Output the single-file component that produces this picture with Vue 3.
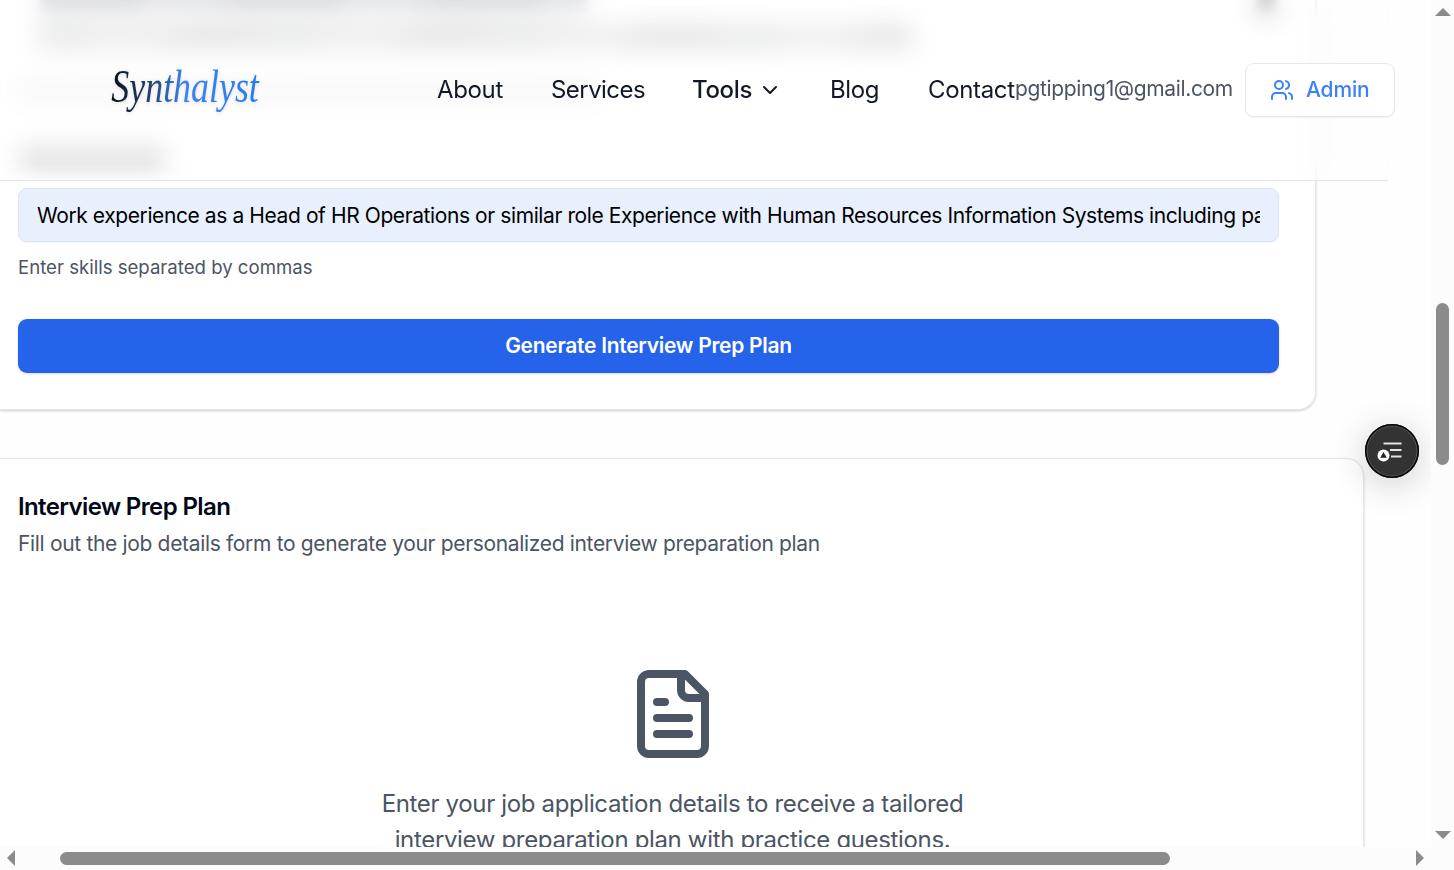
<script setup>
const links = [
  { label: 'About', cls: 'about' },
  { label: 'Services', cls: 'services' },
  { label: 'Tools', cls: 'tools', menu: true },
  { label: 'Blog', cls: 'blog' },
  { label: 'Contact', cls: 'contact' },
]
</script>

<template>
  <div class="window">
    <div class="viewport">
      <main class="page">
        <section class="card form-card">
          <div class="soft soft-title"></div>
          <div class="soft soft-lead"></div>
          <div class="soft soft-note"></div>
          <div class="soft soft-label"></div>
          <div class="soft soft-dot"></div>
          <div class="field"><span class="value">Work experience as a Head of HR Operations or similar role Experience with Human Resources Information Systems including payroll</span></div>
          <p class="hint"><span>Enter skills separated by commas</span></p>
          <button class="generate"><span>Generate Interview Prep Plan</span></button>
        </section>

        <section class="card plan-card">
          <h2><span>Interview Prep Plan</span></h2>
          <p class="sub"><span>Fill out the job details form to generate your personalized interview preparation plan</span></p>
          <div class="empty">
            <svg class="doc" viewBox="0 0 24 24" width="96" height="96" fill="none" stroke="currentColor" stroke-width="2" stroke-linecap="round" stroke-linejoin="round">
              <path d="M15 2H6a2 2 0 0 0-2 2v16a2 2 0 0 0 2 2h12a2 2 0 0 0 2-2V7Z" />
              <path d="M14 2v4a2 2 0 0 0 2 2h4M10 9H8M16 13H8M16 17H8" />
            </svg>
            <p class="e1"><span>Enter your job application details to receive a tailored</span></p>
            <p class="e2"><span>interview preparation plan with practice questions.</span></p>
          </div>
        </section>
      </main>

      <header class="bar">
        <div class="brand"><span class="logo">Synthalyst</span></div>
        <nav>
          <a v-for="l in links" :key="l.label" :class="l.cls">
            <span>{{ l.label }}</span>
            <svg v-if="l.menu" viewBox="0 0 24 24" width="24" height="24" fill="none" stroke="currentColor" stroke-width="2" stroke-linecap="round" stroke-linejoin="round"><path d="m6 9 6 6 6-6" /></svg>
          </a>
        </nav>
        <div class="mail"><span>pgtipping1@gmail.com</span></div>
        <button class="admin">
          <svg viewBox="0 0 24 24" width="24" height="24" fill="none" stroke="currentColor" stroke-width="2" stroke-linecap="round" stroke-linejoin="round">
            <path d="M16 21v-2a4 4 0 0 0-4-4H6a4 4 0 0 0-4 4v2" /><circle cx="9" cy="7" r="4" />
            <path d="M22 21v-2a4 4 0 0 0-3-3.87M16 3.13a4 4 0 0 1 0 7.75" />
          </svg>
          <span>Admin</span>
        </button>
      </header>

      <div class="fab">
        <svg viewBox="0 0 54 54" width="54" height="54">
          <path d="M18.500 19.500h18M25 26h11.500M26 32.500h10.500" stroke="#e4e4e0" stroke-width="2" fill="none" />
          <circle cx="18.500" cy="31.500" r="6" fill="#fff" />
          <path d="M18.500 28l3.300 5.800h-6.600z" fill="#222" />
        </svg>
      </div>
    </div>

    <div class="vscroll">
      <svg width="16" height="8" viewBox="0 0 16 8"><path d="M0 8h16L8 0z" fill="#8b8b8b" /></svg>
      <div class="vthumb"></div>
      <svg class="down" width="16" height="8" viewBox="0 0 16 8"><path d="M0 0h16L8 8z" fill="#8b8b8b" /></svg>
    </div>
    <div class="hscroll">
      <svg width="8" height="16" viewBox="0 0 8 16"><path d="M8 0v16L0 8z" fill="#8b8b8b" /></svg>
      <div class="hthumb"></div>
      <svg class="right" width="8" height="16" viewBox="0 0 8 16"><path d="M0 0v16l8-8z" fill="#8b8b8b" /></svg>
    </div>
  </div>
</template>

<style>
body { margin: 0; overflow: hidden; background: #fcfcfc; }
</style>

<style scoped>
* { box-sizing: border-box; }
p, h2 { margin: 0; }
button { font: inherit; padding: 0; }
span { white-space: nowrap; }
svg { flex: none; display: block; }
.window {
  width: 1454px; height: 870px; overflow: hidden; background: #fcfcfc;
  display: grid; grid-template: 847px 23px / 1431px 23px;
  font-family: Inter, "Liberation Sans", sans-serif; color: #020817;
}
.viewport { position: relative; overflow: hidden; background: #fefefe; }
.page { display: flex; flex-direction: column; gap: 48px; }
.card { background: #fff; border: 1px solid #e2e8f0; border-left: 0; box-shadow: 0 1px 3px rgba(0,0,0,.12), 0 1px 2px rgba(0,0,0,.08); }
.form-card { position: relative; width: 1316px; height: 410px; border-top: 0; border-radius: 0 0 18px 0; padding: 188px 36px 0 18px; }
.soft { position: absolute; filter: blur(4px); }
.soft-title { left: 40px; top: -20px; width: 548px; height: 34px; background: repeating-linear-gradient(90deg, #dcdde1 0 90px, #e4e5e8 110px 170px, #dcdde1 200px); }
.soft-lead { left: 38px; top: 27px; width: 874px; height: 20px; background: repeating-linear-gradient(90deg, #e4e5e5 0 45px, #eaeaeb 60px 110px, #e0e0e1 150px 200px, #e5e5e6 230px); }
.soft-note { left: 18px; top: 83px; width: 580px; height: 16px; background: #f4f4f4; }
.soft-label { left: 20px; top: 150px; width: 145px; height: 17px; background: #d6d6d8; }
.soft-dot { left: 1257px; top: -16px; width: 18px; height: 32px; background: #c8c8c8; }
.field { height: 54px; border: 1px solid #dbe4f2; border-radius: 9px; background: #e8f0fe; padding: 0 18px; box-shadow: 0 1px 2px rgba(0,0,0,.05); display: flex; align-items: center; }
.value { flex: 1; overflow: hidden; font-size: 21px; line-height: 30px; letter-spacing: -.405px; padding-top: 2px; color: #000; }
.hint { margin-top: 12px; font-size: 18.600px; line-height: 27px; color: #4b5563; }
.generate { margin-top: 38px; display: block; width: 100%; height: 54px; border: 0; border-radius: 9px; background: #2563eb; color: #fff; font-size: 21px; font-weight: 600; text-align: center; box-shadow: 0 1px 3px rgba(0,0,0,.15); letter-spacing: -.28px; padding-bottom: 2px; }
.plan-card { width: 1364px; height: 460px; border-radius: 0 18px 0 0; padding: 34px 18px; }
h2 { font-size: 24px; line-height: 28px; font-weight: 600; letter-spacing: -.62px; }
.sub { margin-top: 7px; font-size: 21px; line-height: 31px; color: #4b5563; letter-spacing: -.33px; }
.empty { width: 1309px; display: flex; flex-direction: column; align-items: center; color: #4b5563; font-size: 24px; line-height: 36px; letter-spacing: -.34px; padding-top: 107px; }
.doc { margin-bottom: 24px; }
.bar { position: absolute; left: 0; top: 0; width: 1388px; height: 181px; border-bottom: 1px solid #dfe6ef; display: flex; align-items: center; backdrop-filter: blur(12px); }
.brand { width: 327px; height: 70px; margin-left: 110px; flex: none; display: flex; align-items: center; }
.logo { font-family: "Liberation Serif", serif; font-style: italic; font-size: 46px; line-height: 62px; padding: 0 3px; transform: translate(-1px, -3px) scaleX(.78); transform-origin: left; color: transparent; background: linear-gradient(90deg, #080c18, #244473 28%, #3b82f6 50%, #267bec); background-clip: text; -webkit-background-clip: text; filter: drop-shadow(0 1px 2px rgba(0,0,0,.12)); }
nav { display: flex; width: 578px; flex: none; color: #111827; font-size: 24px; line-height: 36px; }
nav a { display: flex; align-items: center; flex: none; letter-spacing: -.35px; }
.about { width: 114px; }
.services { width: 142px; }
nav .services { letter-spacing: -.55px; }
.tools { width: 138px; gap: 6px; font-weight: 500; margin-left: -1px; }
.blog { width: 98px; }
.contact { width: 87px; }
.mail { width: 230px; flex: none; font-size: 21px; line-height: 26px; padding-bottom: 2px; color: #4b5563; letter-spacing: -.35px; }
.admin { width: 150px; height: 54px; flex: none; border: 1px solid #e2e8f0; border-radius: 9px; background: #fff; color: #3b82f6; font-size: 21px; font-weight: 500; display: flex; align-items: center; padding-left: 24px; gap: 12px; box-shadow: 0 1px 2px rgba(0,0,0,.05); letter-spacing: -.15px; }
.admin span { padding-bottom: 2px; }
.fab { position: absolute; left: 1365px; top: 424px; width: 54px; height: 54px; border-radius: 50%; background: #333; box-shadow: inset 0 0 0 1.500px #050505, inset 0 0 0 2.500px #555, 0 6px 36px rgba(0,0,0,.2); }
.vscroll { display: flex; flex-direction: column; padding: 8px 0 0 4px; }
.vthumb { width: 13px; height: 162px; margin: 287px 0 0 1px; border-radius: 7px; background: #8b8b8b; }
.down { margin-top: 366px; }
.hscroll { display: flex; padding: 3px 0 0 7px; }
.hthumb { width: 1110px; height: 13px; margin: 2px 0 0 45px; border-radius: 7px; background: #8b8b8b; }
.right { margin-left: 246px; }
</style>
